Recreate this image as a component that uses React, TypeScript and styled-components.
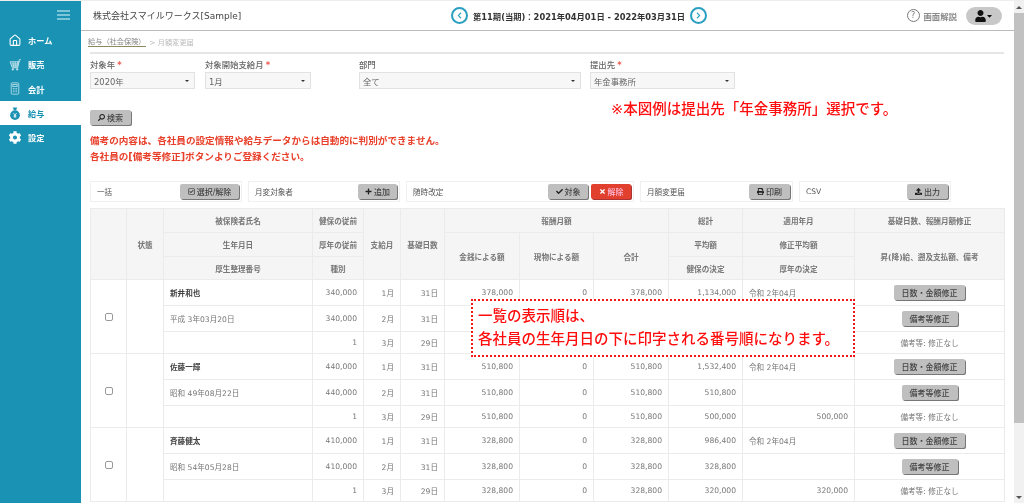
import React from 'react'
import styled, { createGlobalStyle } from 'styled-components'
import { Home } from 'lucide-react'
import {
    FaCaretDown, FaCheck, FaChevronLeft, FaChevronRight, FaCog, FaPlus, FaPrint,
    FaRegCheckSquare, FaSearch, FaTimes, FaUpload, FaUser,
} from 'react-icons/fa'

const GlobalStyle = createGlobalStyle`
    html, body {
        margin: 0;
        height: 503px;
        overflow: hidden;
        background: #fff;
        font-family: "DejaVu Sans", "Noto Sans CJK JP", sans-serif;
    }
`

// own layer: keeps the small grey digits from picking up colour fringes
const Page = styled.div`
    display: flex;
    height: 503px;
    border-top: 1px solid #eee;
    box-sizing: border-box;
    overflow: hidden;
    will-change: transform;
`

const Sidebar = styled.nav`
    width: 81px;
    flex: none;
    background: #1a92b3;
`

const Toggle = styled.div`
    height: 27px;
    display: flex;
    justify-content: flex-end;
    align-items: center;
    padding-right: 11px;
`

const Burger = styled.div`
    width: 13px;
    height: 2px;
    background: #7cc4d8;
    box-shadow: 0 -4px 0 #7cc4d8, 0 4px 0 #7cc4d8;
`

const NavItem = styled.div<{ $active?: boolean }>`
    height: 24.3px;
    display: flex;
    align-items: center;
    gap: 6px;
    padding-left: 8px;
    font-size: 8.2px;
    font-weight: bold;
    background: ${({ $active }) => ($active ? '#fff' : 'transparent')};
    color: ${({ $active }) => ($active ? '#1a92b3' : '#fff')};

    & > svg {
        width: 14px;
        height: 13px;
        flex: none;
    }
`

const Main = styled.div`
    flex: 1;
    min-width: 0;
`

const Header = styled.header`
    height: 29px;
    border-bottom: 1px solid #bbb;
    display: grid;
    grid-template-columns: 358px auto 1fr;
    align-items: center;
    padding: 0 12px;
`

const Company = styled.div`
    font-size: 9px;
    color: #444;
`

const Period = styled.div`
    display: flex;
    align-items: center;
    gap: 5px;
    font-size: 8.3px;
    font-weight: bold;
    color: #333;
`

const RoundArrow = styled.span`
    width: 13px;
    height: 13px;
    border: 2px solid #2a9fc0;
    border-radius: 50%;
    color: #2a9fc0;
    display: flex;
    justify-content: center;
    align-items: center;

    & > svg {
        width: 7px;
        height: 7px;
    }
`

const HeaderRight = styled.div`
    display: flex;
    justify-content: flex-end;
    align-items: center;
`

const HelpMark = styled.span`
    width: 11px;
    height: 11px;
    border: 1px solid #777;
    border-radius: 50%;
    color: #777;
    font-size: 8px;
    display: flex;
    justify-content: center;
    align-items: center;
`

const HelpText = styled.span`
    margin: 0 9px 0 4px;
    font-size: 8.4px;
    font-weight: bold;
    color: #8a8a8a;
`

const UserPill = styled.div`
    width: 36px;
    height: 18px;
    border-radius: 9px;
    background: #c8c8c8;
    display: flex;
    justify-content: center;
    align-items: center;
    color: #111;

    & > svg:first-child {
        width: 11px;
        height: 12px;
    }

    & > svg:last-child {
        width: 7px;
        height: 8px;
    }
`

const Content = styled.main`
    padding: 0 10px 0 9px;
`

const Crumbs = styled.div`
    height: 21px;
    margin-left: -2px;
    display: flex;
    align-items: center;
    gap: 4px;
    font-size: 7.2px;
    color: #bbb;
`

const CrumbLink = styled.span`
    color: #888;
    border-bottom: 1px solid #8a8a60;
`

const Divider = styled.div`
    height: 2px;
    background: #e6e6e6;
`

const Filters = styled.div`
    display: flex;
    gap: 10px;
    padding-top: 4px;
`

const Field = styled.div<{ $width: number; $shift?: number }>`
    width: ${({ $width }) => $width}px;
    margin-left: ${({ $shift }) => $shift ?? 0}px;
`

const FieldLabel = styled.div`
    height: 14px;
    line-height: 15px;
    font-size: 8.4px;
    font-weight: 500;
    color: #666;

    & > b {
        color: #ef5a50;
        margin-left: 2px;
    }
`

const Select = styled.div`
    height: 17px;
    box-sizing: border-box;
    border: 1px solid #e2e2e2;
    background: #f7f7f7;
    padding: 0 5px 0 3px;
    display: flex;
    justify-content: space-between;
    align-items: center;
    font-size: 8.4px;
    color: #666;

    &::after {
        content: '';
        border: 2px solid transparent;
        border-top: 2px solid #333;
        border-bottom: 0;
    }
`

const SearchRow = styled.div`
    display: flex;
    align-items: flex-start;
    padding-top: 21px;
`

const Button = styled.button<{ $width: number; $danger?: boolean }>`
    width: ${({ $width }) => $width}px;
    height: 15px;
    flex: none;
    padding: 0;
    border: 0;
    border-radius: 2px;
    background: ${({ $danger }) => ($danger ? '#e2402e' : '#bfbfbf')};
    box-shadow: 1px 1px 0 ${({ $danger }) => ($danger ? '#a33' : '#777')};
    color: ${({ $danger }) => ($danger ? '#fbd' : '#444')};
    font-family: inherit;
    font-size: 8px;
    font-weight: 500;
    display: inline-flex;
    justify-content: center;
    align-items: center;
    gap: 2px;

    & > svg {
        width: 7px;
        height: 7px;
        color: ${({ $danger }) => ($danger ? '#fff' : '#222')};
    }
`

const FlippedSearch = styled(FaSearch)`
    transform: scaleX(-1);
`

const Note = styled.div`
    margin: -10px 0 0 480px;
    line-height: 18px;
    font-size: 14.5px;
    font-weight: 500;
    color: #ff0d0d;
    white-space: nowrap;
`

const Warning = styled.p`
    margin: 8px 0 0;
    font-size: 9.6px;
    line-height: 16px;
    font-weight: bold;
    color: #e8402a;
    white-space: nowrap;
`

const ActionBar = styled.div`
    display: flex;
    gap: 6px;
    margin-top: 16px;
`

const ActionCard = styled.div<{ $width: number }>`
    width: ${({ $width }) => $width}px;
    height: 21px;
    box-sizing: border-box;
    border: 1px solid #f0f0f0;
    padding: 0 2px 0 6px;
    display: flex;
    align-items: center;
    gap: 3px;
    font-size: 7.6px;
    color: #555;

    & > span {
        margin-right: auto;
    }
`

const TableArea = styled.div`
    position: relative;
    margin-top: 6px;
`

const Table = styled.table`
    width: 914px;
    table-layout: fixed;
    border-collapse: collapse;
    font-size: 7.6px;
    color: #777;
`

const Th = styled.th`
    padding: 0;
    border: 1px solid #ebebeb;
    background: #f5f5f5;
    font-weight: bold;
    color: #777;
    text-align: center;
`

const Td = styled.td<{ $align?: string; $strong?: boolean }>`
    padding: 0 6px;
    border: 1px solid #ebebeb;
    text-align: ${({ $align }) => $align ?? 'right'};
    color: ${({ $strong }) => ($strong ? '#444' : '#777')};
    font-weight: ${({ $strong }) => ($strong ? 'bold' : 'normal')};
    white-space: nowrap;
`

const Row = styled.tr<{ $height: number }>`
    height: ${({ $height }) => $height}px;
`

const Check = styled.input`
    width: 8px;
    height: 8px;
    appearance: none;
    border: 1px solid #999;
    border-radius: 2px;
    background: #fff;
    display: block;
    margin: 0 auto;
`

const Callout = styled.div`
    position: absolute;
    left: 381px;
    top: 91px;
    width: 384px;
    height: 58px;
    box-sizing: border-box;
    border: 2px dotted #f01818;
    background: #fff;
    padding: 4px 0 0 5px;
    font-size: 14.5px;
    line-height: 23px;
    font-weight: 500;
    color: #ff0d0d;
    white-space: nowrap;
`

const Scroll = styled.div`
    width: 10px;
    flex: none;
    background: #f1f1f1;
    display: flex;
    flex-direction: column;
    align-items: center;
`

const ScrollCap = styled.div<{ $down?: boolean }>`
    height: 12px;
    flex: none;
    display: flex;
    align-items: center;

    &::after {
        content: '';
        border: 3px solid transparent;
        border-${({ $down }) => ($down ? 'top' : 'bottom')}: 3px solid #555;
        border-${({ $down }) => ($down ? 'bottom' : 'top')}: 0;
    }
`

const ScrollThumb = styled.div`
    width: 100%;
    height: 410px;
    flex: none;
    background: #c1c1c1;
`

const ScrollTrack = styled.div`
    flex: 1;
`

const CartIcon = () => (
    <svg viewBox="0 0 24 24" fill="none" stroke="#b9e0ea" strokeWidth="1.8">
        <path d="M23 3h-3l-3 15H7L3 7h18M8 7l2 11M12.5 7v11M17 7l-2 11M5 11h14.500M6 14.500h12" />
        <circle cx="8" cy="21" r="1.400" fill="#b9e0ea" />
        <circle cx="16" cy="21" r="1.400" fill="#b9e0ea" />
    </svg>
)

const CalcIcon = () => (
    <svg viewBox="0 0 24 24" fill="none" stroke="#b9e0ea" strokeWidth="1.6">
        <rect x="5" y="1.500" width="14" height="21" rx="2" />
        <rect x="8" y="4.500" width="8" height="4" />
        <path d="M8 12h8M8 15h8M8 18h8" strokeDasharray="2 1" />
    </svg>
)

const MoneyBag = () => (
    <svg viewBox="0 0 24 24" fill="currentColor">
        <path d="M8 1h8l-2 5h-4z" />
        <circle cx="12" cy="15" r="9" />
        <path d="M9 11l3 4 3-4M12 15v5M9.500 16h5M9.500 18h5" stroke="#fff" strokeWidth="1.400" fill="none" />
    </svg>
)

// the callout box covers part of the first employee, so those cells stay empty
const employees = [
    {
        name: '新井和也', birth: '平成 3年03月20日', health: '340,000', covered: true,
        cash: '378,000', total: '1,134,000', average: '378,000', decided: '340,000', revised: '',
    },
    {
        name: '佐藤一輝', birth: '昭和 49年08月22日', health: '440,000', covered: false,
        cash: '510,800', total: '1,532,400', average: '510,800', decided: '500,000', revised: '500,000',
    },
    {
        name: '斉藤健太', birth: '昭和 54年05月28日', health: '410,000', covered: false,
        cash: '328,800', total: '986,400', average: '328,800', decided: '320,000', revised: '320,000',
    },
]

const widths = [36, 37, 149, 51, 37, 44, 75, 74, 75, 74, 112, 150]

export default function App() {
    return (
        <Page>
            <GlobalStyle />
            <Sidebar>
                <Toggle><Burger /></Toggle>
                <NavItem><Home strokeWidth={2} />ホーム</NavItem>
                <NavItem><CartIcon />販売</NavItem>
                <NavItem><CalcIcon />会計</NavItem>
                <NavItem $active><MoneyBag />給与</NavItem>
                <NavItem><FaCog />設定</NavItem>
            </Sidebar>
            <Main>
                <Header>
                    <Company>株式会社スマイルワークス[Sample]</Company>
                    <Period>
                        <RoundArrow><FaChevronLeft /></RoundArrow>
                        第11期(当期)：2021年04月01日 - 2022年03月31日
                        <RoundArrow><FaChevronRight /></RoundArrow>
                    </Period>
                    <HeaderRight>
                        <HelpMark>?</HelpMark>
                        <HelpText>画面解説</HelpText>
                        <UserPill><FaUser /><FaCaretDown /></UserPill>
                    </HeaderRight>
                </Header>
                <Content>
                    <Crumbs><CrumbLink>給与（社会保険）</CrumbLink>&gt; 月額変更届</Crumbs>
                    <Divider />
                    <Filters>
                        <Field $width={105}>
                            <FieldLabel>対象年<b>*</b></FieldLabel>
                            <Select>2020年</Select>
                        </Field>
                        <Field $width={106}>
                            <FieldLabel>対象開始支給月<b>*</b></FieldLabel>
                            <Select>1月</Select>
                        </Field>
                        <Field $width={222} $shift={38}>
                            <FieldLabel>部門</FieldLabel>
                            <Select>全て</Select>
                        </Field>
                        <Field $width={145} $shift={-1}>
                            <FieldLabel>提出先<b>*</b></FieldLabel>
                            <Select>年金事務所</Select>
                        </Field>
                    </Filters>
                    <SearchRow>
                        <Button $width={41}><FlippedSearch />検索</Button>
                        <Note>※本図例は提出先「年金事務所」選択です。</Note>
                    </SearchRow>
                    <Warning>
                        備考の内容は、各社員の設定情報や給与データからは自動的に判別ができません。<br />
                        各社員の[備考等修正]ボタンよりご登録ください。
                    </Warning>
                    <ActionBar>
                        <ActionCard $width={152}>
                            <span>一括</span>
                            <Button $width={59}><FaRegCheckSquare />選択/解除</Button>
                        </ActionCard>
                        <ActionCard $width={152}>
                            <span>月変対象者</span>
                            <Button $width={39}><FaPlus />追加</Button>
                        </ActionCard>
                        <ActionCard $width={228}>
                            <span>随時改定</span>
                            <Button $width={40}><FaCheck />対象</Button>
                            <Button $width={40} $danger><FaTimes />解除</Button>
                        </ActionCard>
                        <ActionCard $width={153}>
                            <span>月額変更届</span>
                            <Button $width={41}><FaPrint />印刷</Button>
                        </ActionCard>
                        <ActionCard $width={152}>
                            <span>CSV</span>
                            <Button $width={41}><FaUpload />出力</Button>
                        </ActionCard>
                    </ActionBar>
                    <TableArea>
                        <Table>
                            <colgroup>
                                {widths.map((w, i) => <col key={i} width={w} />)}
                            </colgroup>
                            <thead>
                                <Row $height={24}>
                                    <Th rowSpan={3} />
                                    <Th rowSpan={3}>状態</Th>
                                    <Th>被保険者氏名</Th>
                                    <Th>健保の従前</Th>
                                    <Th rowSpan={3}>支給月</Th>
                                    <Th rowSpan={3}>基礎日数</Th>
                                    <Th colSpan={3}>報酬月額</Th>
                                    <Th>総計</Th>
                                    <Th>適用年月</Th>
                                    <Th>基礎日数、報酬月額修正</Th>
                                </Row>
                                <Row $height={24}>
                                    <Th>生年月日</Th>
                                    <Th>厚年の従前</Th>
                                    <Th rowSpan={2}>金銭による額</Th>
                                    <Th rowSpan={2}>現物による額</Th>
                                    <Th rowSpan={2}>合計</Th>
                                    <Th>平均額</Th>
                                    <Th>修正平均額</Th>
                                    <Th rowSpan={2}>昇(降)給、遡及支払額、備考</Th>
                                </Row>
                                <Row $height={23}>
                                    <Th>厚生整理番号</Th>
                                    <Th>種別</Th>
                                    <Th>健保の決定</Th>
                                    <Th>厚年の決定</Th>
                                </Row>
                            </thead>
                            <tbody>
                                {employees.map((e) => (
                                    <React.Fragment key={e.name}>
                                        <Row $height={26}>
                                            <Td rowSpan={3} $align="center"><Check type="checkbox" /></Td>
                                            <Td rowSpan={3} />
                                            <Td $align="left" $strong>{e.name}</Td>
                                            <Td>{e.health}</Td>
                                            <Td>1月</Td>
                                            <Td>31日</Td>
                                            <Td>{e.cash}</Td>
                                            <Td>0</Td>
                                            <Td>{e.cash}</Td>
                                            <Td>{e.total}</Td>
                                            <Td $align="left">令和 2年04月</Td>
                                            <Td $align="center"><Button $width={71}>日数・金額修正</Button></Td>
                                        </Row>
                                        <Row $height={26}>
                                            <Td $align="left">{e.birth}</Td>
                                            <Td>{e.health}</Td>
                                            <Td>2月</Td>
                                            <Td>31日</Td>
                                            <Td>{!e.covered && e.cash}</Td>
                                            <Td>{!e.covered && '0'}</Td>
                                            <Td>{!e.covered && e.cash}</Td>
                                            <Td>{!e.covered && e.average}</Td>
                                            <Td />
                                            <Td $align="center"><Button $width={56}>備考等修正</Button></Td>
                                        </Row>
                                        <Row $height={22}>
                                            <Td />
                                            <Td>1</Td>
                                            <Td>3月</Td>
                                            <Td>29日</Td>
                                            <Td>{!e.covered && e.cash}</Td>
                                            <Td>{!e.covered && '0'}</Td>
                                            <Td>{!e.covered && e.cash}</Td>
                                            <Td>{!e.covered && e.decided}</Td>
                                            <Td>{e.revised}</Td>
                                            <Td $align="center">備考等: 修正なし</Td>
                                        </Row>
                                    </React.Fragment>
                                ))}
                            </tbody>
                        </Table>
                        <Callout>
                            一覧の表示順は、<br />
                            各社員の生年月日の下に印字される番号順になります。
                        </Callout>
                    </TableArea>
                </Content>
            </Main>
            <Scroll>
                <ScrollCap />
                <ScrollThumb />
                <ScrollTrack />
                <ScrollCap $down />
            </Scroll>
        </Page>
    )
}
